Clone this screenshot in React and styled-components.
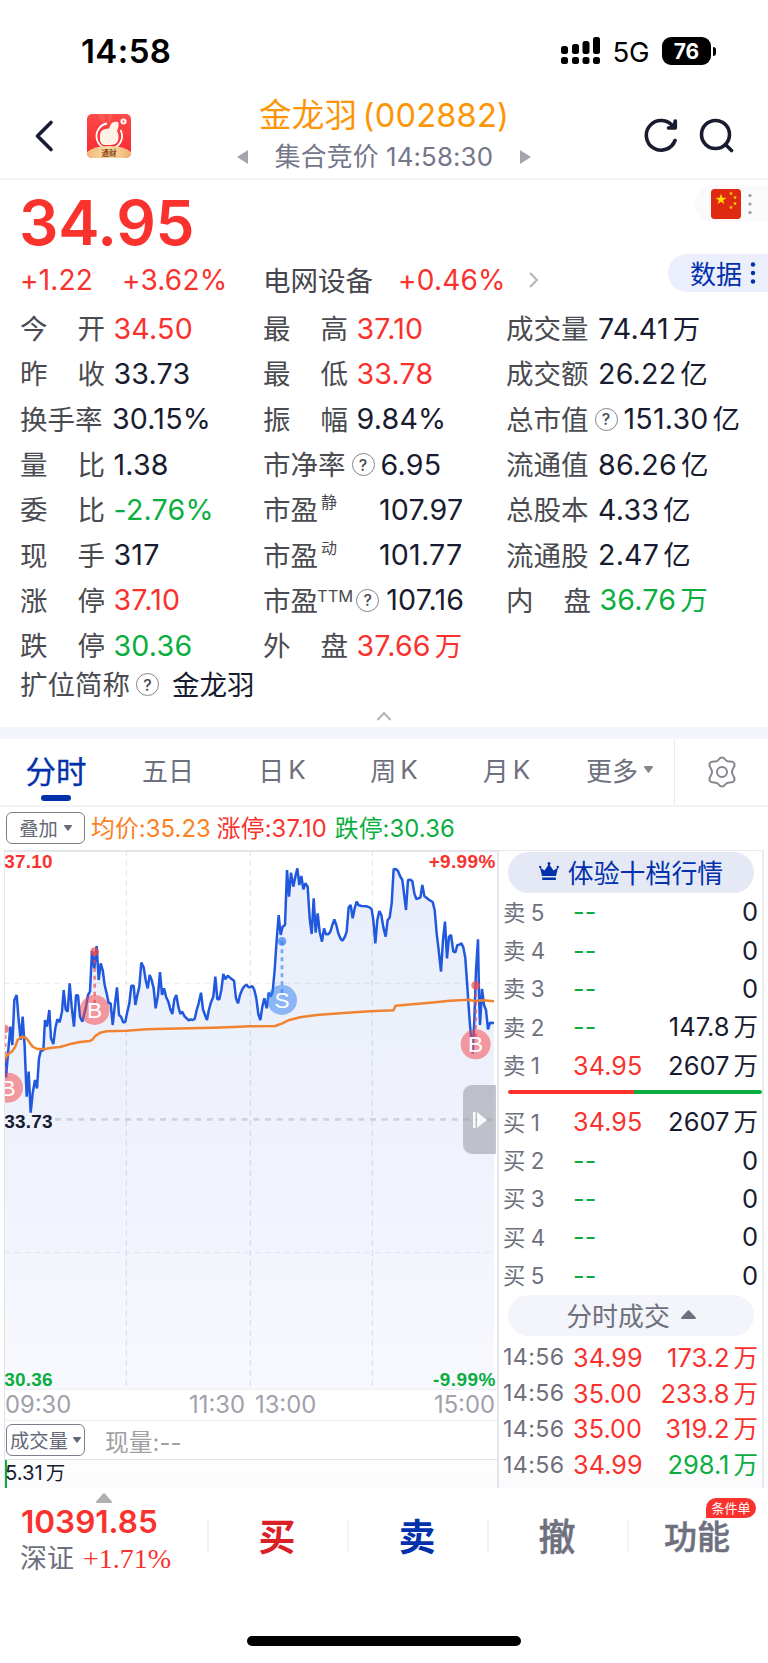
import React from 'react'
import styled, { createGlobalStyle } from 'styled-components'

const RED = '#f9322e'
const GREEN = '#0aae3e'
const BLUE = '#0331ab'
const DARK = '#191c30'
const GREY = '#6e707e'

const tones = { red: RED, green: GREEN, dark: DARK, orange: '#fb8124' }

const GlobalStyle = createGlobalStyle`
  * {
    box-sizing: border-box;
  }
  body {
    margin: 0;
    background: #fff;
    font-family: Inter, 'Noto Sans CJK SC', sans-serif;
    color: ${DARK};
  }
`
const Page = styled.div`
  width: 768px;
  height: 1663px;
  display: flex;
  flex-direction: column;
  overflow: hidden;
  background: #fff;
  white-space: nowrap;
`

/* status bar */
const StatusBar = styled.div`
  height: 88px;
  padding: 14px 52px 0 81px;
  display: flex;
  align-items: center;
  justify-content: space-between;
`
const Clock = styled.span`
  font-size: 33px;
  font-weight: 600;
  letter-spacing: 0.4px;
  color: #000;
`
const StatusRight = styled.div`
  display: flex;
  align-items: center;
  color: #000;
`
const Network = styled.span`
  font-size: 27.5px;
  margin: 1px 13px 0 12px;
  letter-spacing: -0.4px;
`
const Battery = styled.div`
  width: 49px;
  height: 28px;
  border-radius: 9px;
  background: #000;
  color: #fff;
  font-size: 21px;
  font-weight: 700;
  display: flex;
  align-items: center;
  justify-content: center;
`
const BatteryNub = styled.div`
  width: 3px;
  height: 9px;
  margin-left: 2px;
  border-radius: 0 3px 3px 0;
  background: #000;
`

/* header */
const Header = styled.div`
  height: 92px;
  display: flex;
  border-bottom: 2px solid #f4f4f6;
`
const HeaderLeft = styled.div`
  width: 237px;
  padding: 26px 0 0 34px;
  display: flex;
  gap: 33px;
`
const HeaderCenter = styled.div`
  width: 294px;
  display: flex;
  flex-direction: column;
  align-items: center;
`
const StockName = styled.div`
  margin-top: 7px;
  font-size: 32.6px;
  line-height: 40px;
  letter-spacing: 0.2px;
  word-spacing: -4px;
  color: #fc9508;
`
const Session = styled.div`
  width: 294px;
  display: flex;
  justify-content: space-between;
  align-items: center;
  font-size: 25.8px;
  line-height: 32px;
  margin-top: 6px;
  letter-spacing: 0.15px;
  color: #74768a;
`
const HeaderRight = styled.div`
  padding: 29px 0 0 112px;
  display: flex;
  gap: 20px;
`

/* quote */
const Quote = styled.div`
  height: 547px;
  padding-left: 20px;
  display: flex;
  flex-direction: column;
`
const PriceRow = styled.div`
  height: 74px;
  display: flex;
  justify-content: space-between;
`
const Price = styled.div`
  margin-left: -1px;
  font-size: 62px;
  line-height: 86px;
  font-weight: 600;
  letter-spacing: -0.2px;
  color: ${RED};
`
const FlagPill = styled.div`
  width: 73px;
  height: 37px;
  margin-top: 5px;
  padding-left: 16px;
  border-radius: 19px 0 0 19px;
  background: #fafafa;
  display: flex;
  align-items: center;
  gap: 5px;
`
const ChangeRow = styled.div`
  height: 52px;
  display: flex;
  align-items: center;
  font-size: 28px;
  color: ${RED};
`
const Change = styled.span`
  width: ${p => p.$w}px;
  letter-spacing: 0.2px;
`
const Sector = styled.span`
  width: 135px;
  margin: -3px 0 0 -1px;
  font-size: 27.5px;
  color: #45464e;
`
const DataPill = styled.div`
  width: 100px;
  height: 38px;
  margin: -14px 0 0 auto;
  padding: 0 0 2px 22px;
  border-radius: 19px 0 0 19px;
  background: #ebeffc;
  display: flex;
  align-items: center;
  gap: 7px;
  font-size: 26px;
  color: ${BLUE};
  svg {
    margin-top: 2px;
  }
`
const Stats = styled.div`
  display: grid;
  grid-template-columns: 243px 243px 262px;
  grid-auto-rows: 45.3px;
`
const Cell = styled.div`
  display: flex;
  align-items: center;
`
const Label = styled.div`
  min-width: ${p => (p.$spread ? '85px' : '0')};
  margin-top: -3px;
  display: flex;
  align-items: center;
  justify-content: space-between;
  font-size: 27.5px;
  color: #4a4b50;
`
const Sup = styled.span`
  align-self: flex-start;
  margin: ${p => (p.$wide ? '7px -3px 0 -1px' : '1px 0 0 3px')};
  font-size: ${p => (p.$wide ? 16.5 : 16)}px;
`
const Value = styled.div`
  margin-left: ${p => p.$gap}px;
  font-size: 28.6px;
  line-height: 34px;
  letter-spacing: 0.2px;
  color: ${p => tones[p.$tone]};
  b {
    margin-left: 4px;
    font-size: 27.5px;
    font-weight: 400;
    line-height: 1;
  }
`
const Help = styled.span`
  width: 23px;
  height: 23px;
  margin-left: 6px;
  border: 1.5px solid #85868c;
  border-radius: 50%;
  display: flex;
  align-items: center;
  justify-content: center;
  font-size: 16px;
  font-weight: 500;
  color: #4a4b50;
`
const AliasRow = styled.div`
  height: 33px;
  display: flex;
  align-items: center;
`
const Alias = styled.div`
  margin: -3px 0 0 13px;
  font-size: 27.5px;
`
const Collapse = styled.div`
  display: flex;
  justify-content: center;
  padding: 10px 20px 0 0;
`
const Band = styled.div`
  height: 12px;
  background: #f3f5fa;
`

/* tabs */
const Tabs = styled.div`
  height: 68px;
  display: flex;
  border-bottom: 2px solid #f2f3f6;
`
const Tab = styled.div`
  width: ${p => p.$w}px;
  padding-bottom: 5px;
  display: flex;
  align-items: center;
  justify-content: center;
  gap: 6px;
  font-size: 26px;
  color: ${GREY};
`
const ActiveTab = styled(Tab)`
  position: relative;
  font-size: 30.5px;
  -webkit-text-stroke: 0.3px ${BLUE};
  color: ${BLUE};
  &::after {
    content: '';
    position: absolute;
    bottom: 4px;
    width: 30px;
    height: 6px;
    border-radius: 3px;
    background: ${BLUE};
  }
`
const PeriodK = styled.span`
  margin-left: -2px;
  font-size: 26px;
`
const TabSettings = styled.div`
  flex: 1;
  border-left: 1px solid #ececf0;
  display: flex;
  align-items: center;
  justify-content: center;
`
const Legend = styled.div`
  height: 43px;
  padding: 0 0 1px 6px;
  display: flex;
  align-items: center;
`
const Select = styled.div`
  width: 79px;
  height: 32px;
  padding-bottom: 1px;
  border: 1.5px solid #7c7e8c;
  border-radius: 6px;
  display: flex;
  align-items: center;
  justify-content: center;
  gap: ${p => p.$gap || 6}px;
  font-size: 19.3px;
  color: #666877;
`
const LegendItem = styled.span`
  margin: -4px 0 0 ${p => p.$ml}px;
  font-size: 23.8px;
  letter-spacing: 0.1px;
  color: ${p => tones[p.$tone]};
`

/* chart and order book */
const Market = styled.div`
  height: 638px;
  padding-left: 4px;
  display: flex;
  background: linear-gradient(#fff 94%, #fbfbfd);
`
const ChartPane = styled.div`
  width: 495px;
  border: 2px solid #e4e5ea;
  border-width: 2px 2px 0 1px;
  display: flex;
  flex-direction: column;
`
const Plot = styled.div`
  position: relative;
  height: 538px;
  svg {
    display: block;
  }
`
const Handle = styled.div`
  position: absolute;
  right: 1px;
  top: 233px;
  width: 33px;
  height: 69px;
  border-radius: 9px 0 0 9px;
  background: rgba(150, 152, 160, 0.55);
  display: flex;
  align-items: center;
  justify-content: center;
`
const Times = styled.div`
  height: 31px;
  padding-bottom: 2px;
  display: flex;
  align-items: center;
  font-size: 23.8px;
  color: #a0a1aa;
  border-bottom: 1px solid #ececf0;
  span:nth-child(2) {
    margin: 0 10px 0 auto;
  }
  span:nth-child(4) {
    margin: 0 2px 0 auto;
  }
`
const VolumeHead = styled.div`
  height: 39px;
  padding-left: 1px;
  display: flex;
  align-items: center;
  gap: 20px;
  font-size: 23.8px;
  color: #a0a0a4;
  border-bottom: 1px solid #e4e5ea;
`
const Volume = styled.div`
  flex: 1;
  border-left: 2px solid ${GREEN};
  font-size: 20.3px;
  line-height: 25px;
  letter-spacing: 0;
  span {
    margin-left: -2px;
  }
  b {
    margin-left: 3px;
    font-size: 19.5px;
    font-weight: 400;
  }
`
const Book = styled.div`
  width: 265px;
  border: 1px solid #e9eaee;
  border-width: 1px 2px 0 0;
  display: flex;
  flex-direction: column;
`
const BookPill = styled.div`
  width: 246px;
  height: 41px;
  flex: none;
  margin: ${p => (p.$light ? '0 0 4px' : '1px 0 0')} 9px;
  padding-bottom: 2px;
  border-radius: 21px;
  background: ${p => (p.$light ? '#f3f5fa' : '#e5e9f5')};
  color: ${p => (p.$light ? GREY : BLUE)};
  display: flex;
  align-items: center;
  justify-content: center;
  gap: ${p => (p.$light ? 11 : 9)}px;
  font-size: 25.9px;
`
const BookRow = styled.div`
  height: ${p => p.$h}px;
  padding: 0 4px 0 4px;
  display: flex;
  align-items: center;
`
const Side = styled.span`
  width: 70px;
  margin-top: ${p => (p.$time ? -1 : -3)}px;
  font-size: ${p => (p.$time ? 23.2 : 22.4)}px;
  letter-spacing: ${p => (p.$time ? 0.4 : 0)}px;
  word-spacing: -1px;
  color: ${GREY};
`
const BookPrice = styled.span`
  font-size: 25.2px;
  letter-spacing: 0.1px;
  color: ${p => tones[p.$tone]};
`
const Amount = styled.span`
  margin-left: auto;
  font-size: 25.5px;
  line-height: 30px;
  color: ${p => tones[p.$tone]};
  b {
    margin-left: 4px;
    font-size: 24.5px;
    font-weight: 400;
    line-height: 1;
  }
`
const Ratio = styled.div`
  width: 254px;
  height: 4px;
  flex: none;
  margin: 5px 0 9px 9px;
  border-radius: 2px;
  background: linear-gradient(90deg, ${RED} 49.5%, ${GREEN} 49.5%);
`

/* bottom bar */
const BottomBar = styled.div`
  height: 148px;
  display: flex;
`
const IndexBox = styled.div`
  width: 207px;
  padding: 5px 0 0 20px;
`
const IndexArrow = styled.div`
  height: 10px;
  padding-left: 76px;
  display: flex;
`
const IndexValue = styled.div`
  font-size: 31.5px;
  line-height: 38px;
  font-weight: 600;
  letter-spacing: 0;
  margin-left: 1px;
  color: ${RED};
`
const IndexChange = styled.div`
  display: flex;
  align-items: center;
  gap: 9px;
  margin-top: -1px;
  font-size: 27px;
  line-height: 38px;
  color: ${GREY};
  span {
    font-family: 'Liberation Serif', serif;
    font-size: 28px;
    color: ${RED};
  }
`
const Action = styled.div`
  position: relative;
  width: 140px;
  height: 32px;
  margin-top: 32px;
  padding: 0 2px 2px 0;
  border-left: 2px solid #f3f4fa;
  display: flex;
  align-items: center;
  justify-content: center;
  font-size: ${p => p.$size || 37}px;
  font-weight: ${p => (p.$muted ? 500 : 700)};
  -webkit-text-stroke: ${p => (p.$muted ? '0.5px' : '0')} ${p => p.$color};
  color: ${p => p.$color};
`
const Badge = styled.span`
  position: absolute;
  right: 11px;
  top: -22px;
  width: 50px;
  height: 20px;
  border-radius: 10px 10px 10px 0;
  background: ${RED};
  color: #fff;
  font-size: 13px;
  font-weight: 400;
  line-height: 20px;
  text-align: center;
  -webkit-text-stroke: 0;
`
const HomeIndicator = styled.div`
  width: 274px;
  height: 10px;
  margin-left: 247px;
  border-radius: 5px;
  background: #000;
`

const stats = [
  [['今开', '34.50', 'red'], ['最高', '37.10', 'red'], ['成交量', '74.41', 'dark', { unit: '万' }]],
  [['昨收', '33.73', 'dark'], ['最低', '33.78', 'red'], ['成交额', '26.22', 'dark', { unit: '亿' }]],
  [['换手率', '30.15%', 'dark'], ['振幅', '9.84%', 'dark'], ['总市值', '151.30', 'dark', { unit: '亿', help: true, gap: 6 }]],
  [['量比', '1.38', 'dark'], ['市净率', '6.95', 'dark', { help: true, gap: 6 }], ['流通值', '86.26', 'dark', { unit: '亿' }]],
  [['委比', '-2.76%', 'green'], ['市盈', '107.97', 'dark', { sup: '静', gap: 42 }], ['总股本', '4.33', 'dark', { unit: '亿' }]],
  [['现手', '317', 'dark'], ['市盈', '101.77', 'dark', { sup: '动', gap: 42 }], ['流通股', '2.47', 'dark', { unit: '亿' }]],
  [['涨停', '37.10', 'red'], ['市盈', '107.16', 'dark', { sup: 'TTM', help: true, gap: 7 }], ['内盘', '36.76', 'green', { unit: '万' }]],
  [['跌停', '30.36', 'green'], ['外盘', '37.66', 'red', { unit: '万' }]],
]

const asks = [['卖 5', '--', '0'], ['卖 4', '--', '0'], ['卖 3', '--', '0'], ['卖 2', '--', '147.8万'], ['卖 1', '34.95', '2607万']]
const bids = [['买 1', '34.95', '2607万'], ['买 2', '--', '0'], ['买 3', '--', '0'], ['买 4', '--', '0'], ['买 5', '--', '0']]
const trades = [
  ['34.99', '173.2万', 'red'],
  ['35.00', '233.8万', 'red'],
  ['35.00', '319.2万', 'red'],
  ['34.99', '298.1万', 'green'],
]

const morning = '14,655 18,712 24,640 31,560 37,615 43,480 50,465 56,540 62,600 68,530 74,620 80,770 86,695 92,818 98,760 105,720 111,745 117,655 123,630 130,632 135,540 141,560 148,510 153,595 160,612 166,565 172,538 179,547 186,515 191,450 197,508 203,515 209,430 215,500 222,560 228,466 234,466 240,530 247,545 258,500 264,465 270,455 276,333 283,385 290,318 296,420 302,370 308,390 314,435 320,460 326,490 332,490 338,555 344,500 351,442 357,525 363,530 370,548 376,545 382,515 388,490 394,437 401,437 406,495 412,465 418,440 424,368 431,382 437,420 443,445 449,405 455,420 461,445 467,505 474,465 480,396 486,465 492,445 498,470 505,485 511,508 517,522 523,478 529,465 535,500 541,522 547,515 553,528 560,535 566,541 572,538 578,540 584,537 590,510 596,490 603,458 609,508 615,525 621,540 627,508 633,487 640,470 646,410 652,478 658,478 664,450 670,402 676,418 683,407 690,413 696,418 702,422 708,475 714,490 720,465 726,450 732,440 739,434 745,441'
const afternoon = '0,442 7,438 13,450 19,475 25,522 31,540 37,500 43,475 50,505 56,458 62,470 68,455 74,390 80,300 86,225 92,285 98,260 105,255 111,90 117,170 123,98 130,140 136,110 142,85 148,135 154,108 160,148 166,130 173,140 179,235 185,282 191,175 197,278 203,220 209,275 216,305 222,265 228,283 235,283 241,275 247,255 253,238 259,255 265,280 271,295 277,302 284,292 290,275 296,202 302,195 308,235 314,205 320,185 326,196 335,198 350,199 360,203 365,208 370,240 376,310 382,240 388,213 394,225 400,262 407,290 413,240 419,233 425,190 431,87 438,88 444,93 450,108 457,120 462,160 468,210 474,120 480,119 487,123 493,160 499,177 511,173 517,135 523,168 535,178 548,186 554,210 560,280 566,330 573,395 579,300 585,245 591,355 597,290 603,285 610,335 616,337 622,315 628,314 634,310 640,322 646,355 652,440 658,530 663,590 668,640 673,540 678,390 684,298 687,460 690,555 696,447 702,495 708,510 714,568 720,548 732,549'
const avgMorning = '14,655 25,642 35,635 45,622 53,600 62,592 75,591 85,602 98,620 112,627 135,627 155,623 180,621 215,611 240,606 270,603 278,598 286,588 300,578 320,574 380,572 440,568 500,566 640,563 700,561'
const avgAfternoon = '0,559 75,558 95,551 115,541 150,532 200,525 280,519 360,514 430,511 437,497 470,494 540,488 600,482 655,479 675,483 700,481 732,484'

// the afternoon session starts where the morning one ends
const joinSessions = (am, pm) =>
  am + ' ' + pm.split(' ').map(p => {
    const [x, y] = p.split(',')
    return (Number(x) + 750) + ',' + y
  }).join(' ')

const priceLine = joinSessions(morning, afternoon)
const avgLine = joinSessions(avgMorning, avgAfternoon)

const Triangle = ({ w, h, color, up }) => (
  <svg width={w} height={h} viewBox="0 0 12 8" preserveAspectRatio="none" fill={color}>
    <path d={up ? 'M5.2.6Q6-.2 6.8.6L11.8 6.6Q12.3 8 11 8H1Q-.3 8 .2 6.6Z' : 'M5.2 7.4Q6 8.2 6.8 7.4L11.8 1.4Q12.3 0 11 0H1Q-.3 0 .2 1.4Z'} />
  </svg>
)

const Dots = ({ color, r, gap }) => (
  <svg width={8} height={30} viewBox="0 0 8 30" fill={color}>
    {[15 - gap, 15, 15 + gap].map(y => <circle key={y} cx="4" cy={y} r={r} />)}
  </svg>
)

const Signal = () => (
  <svg width="40" height="28" viewBox="0 0 40 28">
    {[[0, 9, 8], [11, 7, 10], [21.5, 4, 13], [32, 0, 17]].map(([x, y, h]) => (
      <g key={x}>
        <rect x={x} y={y} width="7" height={h} rx="2.5" />
        <rect x={x} y="20" width="7" height="7" rx="2.5" />
      </g>
    ))}
  </svg>
)

const Logo = () => (
  <svg width="44" height="44" viewBox="0 0 44 44">
    <defs>
      <linearGradient id="logoBg" x1="0" y1="0" x2="0" y2="1">
        <stop offset="0" stopColor="#fb4a48" />
        <stop offset="1" stopColor="#fa2730" />
      </linearGradient>
      <linearGradient id="gold" x1="0" y1="0" x2="1" y2="0">
        <stop offset="0" stopColor="#f2b978" />
        <stop offset=".5" stopColor="#fbdda9" />
        <stop offset="1" stopColor="#f0b36e" />
      </linearGradient>
      <clipPath id="logoClip"><rect width="44" height="44" rx="5" /></clipPath>
    </defs>
    <g clipPath="url(#logoClip)">
      <rect width="44" height="44" fill="url(#logoBg)" />
      <path d="M10 0l9 13L17 0zM21 0l1 10L26 0z" fill="#ff7a6a" opacity=".4" />
      <path d="M20 9.500A12.800 12.800 0 1 0 33.500 16" fill="none" stroke="#fff" strokeWidth="1.800" />
      <path d="M14.500 17Q17 14.500 22 14.500L24 10Q26 7 31 8Q32.500 11 30 17Q32.500 21 31 26.500Q29.500 31 23 31H17Q13 30 13 25Q12.500 19 14.500 17Z" fill="#fff3e8" />
      <circle cx="36.500" cy="7.500" r="3" fill="#fff" />
      <path d="M36.500 5.800v3.400M35 7.300h3" stroke="#f55" strokeWidth=".7" />
      <path d="M0 44V38Q7 32 22 32T44 38V44Z" fill="url(#gold)" />
      <text x="22" y="41.500" textAnchor="middle" fontSize="7.500" fontWeight="700" fill="#8b4312">通财</text>
    </g>
  </svg>
)

const Flag = () => {
  const star = 'M0-5L1.200-1.600L4.800-1.500L1.900.6L2.900 4L0 2L-2.900 4L-1.900.6L-4.800-1.500L-1.200-1.600Z'
  return (
    <svg width="30" height="30" viewBox="0 0 30 30">
      <rect width="30" height="30" rx="3.500" fill="#df2910" />
      <path d={star} transform="translate(10 10.500) scale(1.150)" fill="#ffde00" />
      {[[20, 4.5], [24, 8.5], [24, 14.5], [20, 18.5]].map(([x, y]) => (
        <path key={y} d={star} transform={`translate(${x} ${y}) scale(.42)`} fill="#ffde00" />
      ))}
    </svg>
  )
}

const Marker = ({ x, y, dotY, letter, color }) => (
  <g>
    <line x1={x} x2={x} y1={dotY} y2={y - 10} stroke={color} strokeWidth="8" strokeDasharray="12 12" opacity=".65" />
    <circle cx={x} cy={dotY} r="13" fill={color} opacity=".7" />
    <circle cx={x} cy={y} r="45" fill={color} opacity=".53" />
    <text x={x} y={y + 24} textAnchor="middle" fontSize="68" fill="#fff">{letter}</text>
  </g>
)

// three drawing units per pixel
const Chart = () => (
  <svg width="492" height="538" viewBox="15 36 1476 1614" fontFamily="Liberation Sans, Arial, sans-serif">
    <defs>
      <linearGradient id="area" x1="0" y1="0" x2="0" y2="1">
        <stop offset="0" stopColor="#e9eefa" />
        <stop offset=".6" stopColor="#f0f3fd" />
        <stop offset="1" stopColor="#f8f9fe" />
      </linearGradient>
    </defs>
    <polygon points={`14,1647 ${priceLine} 1482,1647`} fill="url(#area)" />
    <g stroke="#5a6078" strokeOpacity=".18" strokeWidth="3" strokeDasharray="18 12">
      {[379, 751, 1117].map(x => <line key={x} x1={x} x2={x} y1="30" y2="1647" />)}
      {[430, 1238].map(y => <line key={y} x1="14" x2="1482" y1={y} y2={y} strokeOpacity=".12" />)}
    </g>
    <line x1="165" x2="1482" y1="838" y2="838" stroke="#cfd3e0" strokeWidth="8" strokeDasharray="18 17" />
    <line x1="14" x2="1491" y1="1648" y2="1648" stroke="#ececf2" strokeWidth="3" />
    <polyline points={priceLine} fill="none" stroke="#2159de" strokeWidth="7.500" strokeLinejoin="bevel" />
    <polyline points={avgLine} fill="none" stroke="#f08230" strokeWidth="7.500" strokeLinejoin="round" />
    <circle cx="24" cy="743" r="45" fill="#f5484c" opacity=".53" />
    <text x="24" y="767" textAnchor="middle" fontSize="68" fill="#fff">B</text>
    <circle cx="14" cy="567" r="13" fill="#f5484c" opacity=".7" />
    <line x1="16" x2="16" y1="585" y2="700" stroke="#f5484c" strokeWidth="7" strokeDasharray="12 12" opacity=".65" />
    <Marker x={284} y={510} dotY={335} letter="B" color="#f5484c" />
    <Marker x={846} y={480} dotY={304} letter="S" color="#3580ee" />
    <Marker x={1427} y={613} dotY={436} letter="B" color="#f5484c" />
    <g fontSize="57" fontWeight="700">
      <text x="13" y="85" fill={RED} textLength="145">37.10</text>
      <text x="13" y="864" fill={DARK} textLength="145">33.73</text>
      <text x="13" y="1637" fill={GREEN} textLength="145">30.36</text>
      <text x="1486" y="85" fill={RED} textAnchor="end" textLength="200">+9.99%</text>
      <text x="1486" y="1637" fill={GREEN} textAnchor="end" textLength="187">-9.99%</text>
    </g>
  </svg>
)

const splitUnit = text => (text.endsWith('万') ? <>{text.slice(0, -1)}<b>万</b></> : text)

const Stat = ({ item }) => {
  const [label, value, tone, opts = {}] = item
  const spread = label.length === 2 && !opts.sup
  return (
    <Cell>
      <Label $spread={spread}>
        {spread ? [...label].map(c => <span key={c}>{c}</span>) : <span>{label}</span>}
        {opts.sup && <Sup $wide={opts.sup === 'TTM'}>{opts.sup}</Sup>}
      </Label>
      {opts.help && <Help>?</Help>}
      <Value $tone={tone} $gap={opts.gap || (spread ? 8.5 : 9.5)}>
        {value}{opts.unit && <b>{opts.unit}</b>}
      </Value>
    </Cell>
  )
}

const renderLevels = levels =>
  levels.map(([side, price, amount]) => (
    <BookRow key={side} $h={38.4}>
      <Side>{side}</Side>
      <BookPrice $tone={price === '--' ? 'green' : 'red'}>{price}</BookPrice>
      <Amount $tone="dark">{splitUnit(amount)}</Amount>
    </BookRow>
  ))

const App = () => {
  return (
    <Page>
      <GlobalStyle />
      <StatusBar>
        <Clock>14:58</Clock>
        <StatusRight>
          <Signal />
          <Network>5G</Network>
          <Battery>76</Battery>
          <BatteryNub />
        </StatusRight>
      </StatusBar>

      <Header>
        <HeaderLeft>
          <svg width="20" height="44" viewBox="0 0 20 44" fill="none" stroke={DARK} strokeWidth="3.600" strokeLinecap="round" strokeLinejoin="round">
            <path d="M17 8.500L3.500 22L17 35.500" />
          </svg>
          <Logo />
        </HeaderLeft>
        <HeaderCenter>
          <StockName>金龙羽 (002882)</StockName>
          <Session>
            <svg width="11" height="14" viewBox="0 0 11 14" fill="#a3a4ae"><path d="M11 0V14L0 7Z" /></svg>
            <span>集合竞价 14:58:30</span>
            <svg width="11" height="14" viewBox="0 0 11 14" fill="#a3a4ae"><path d="M0 0V14L11 7Z" /></svg>
          </Session>
        </HeaderCenter>
        <HeaderRight>
          <svg width="36" height="36" viewBox="0 0 36 36" fill="none" stroke={DARK} strokeWidth="3.600" strokeLinecap="round" strokeLinejoin="round">
            <path d="M32 23.500A14.800 14.800 0 1 1 30 9.500" />
            <path d="M32.300 4V11H25.500L31 10Z" fill={DARK} />
          </svg>
          <svg width="36" height="36" viewBox="0 0 36 36" fill="none" stroke={DARK} strokeWidth="3.600" strokeLinecap="round">
            <circle cx="16.500" cy="17.500" r="14" />
            <path d="M26.500 27.500L32.500 33.500" />
          </svg>
        </HeaderRight>
      </Header>

      <Quote>
        <PriceRow>
          <Price>34.95</Price>
          <FlagPill>
            <Flag />
            <Dots color="#9a9a9e" r={1.6} gap={8.5} />
          </FlagPill>
        </PriceRow>
        <ChangeRow>
          <Change $w={102}>+1.22</Change>
          <Change $w={142}>+3.62%</Change>
          <Sector>电网设备</Sector>
          <Change $w={130}>+0.46%</Change>
          <svg width="12" height="18" viewBox="0 0 12 18" fill="none" stroke="#b4b4b8" strokeWidth="2"><path d="M2 2L9 9L2 16" /></svg>
          <DataPill>数据 <Dots color={BLUE} r={2.2} gap={8.5} /></DataPill>
        </ChangeRow>
        <Stats>
          {stats.flat().map((item, i) => <Stat key={i} item={item} />)}
        </Stats>
        <AliasRow>
          <Label>扩位简称</Label>
          <Help>?</Help>
          <Alias>金龙羽</Alias>
        </AliasRow>
        <Collapse>
          <svg width="16" height="10" viewBox="0 0 16 10" fill="none" stroke="#b2b3ba" strokeWidth="2"><path d="M1.500 9L8 2L14.500 9" /></svg>
        </Collapse>
      </Quote>
      <Band />

      <Tabs>
        <ActiveTab $w={112}>分时</ActiveTab>
        <Tab $w={112}>五日</Tab>
        <Tab $w={116}>日<PeriodK>K</PeriodK></Tab>
        <Tab $w={108}>周<PeriodK>K</PeriodK></Tab>
        <Tab $w={117}>月<PeriodK>K</PeriodK></Tab>
        <Tab $w={109}>更多 <Triangle w={9} h={7} color="#85868e" /></Tab>
        <TabSettings>
          <svg width="32" height="32" viewBox="0 0 32 32" fill="none" stroke="#85878e" strokeWidth="2" strokeLinejoin="round">
            <path d="M16 1.500Q17.800 1.500 19 3.300Q20.600 5.800 23.600 5.600Q27 5.400 28 7Q29.200 8.700 27.800 11.300Q26 14 26 16T27.800 20.700Q29.200 23.300 28 25Q27 26.600 23.600 26.400Q20.600 26.200 19 28.700Q17.800 30.500 16 30.500T13 28.700Q11.400 26.200 8.400 26.400Q5 26.600 4 25Q2.800 23.300 4.200 20.700Q6 18 6 16T4.200 11.300Q2.800 8.700 4 7Q5 5.400 8.400 5.600Q11.400 5.800 13 3.300Q14.200 1.500 16 1.500Z" />
            <circle cx="16" cy="16" r="5" />
          </svg>
        </TabSettings>
      </Tabs>
      <Legend>
        <Select>叠加 <Triangle w={8} h={6} color="#666877" /></Select>
        <LegendItem $tone="orange" $ml={6}>均价:35.23</LegendItem>
        <LegendItem $tone="red" $ml={6}>涨停:37.10</LegendItem>
        <LegendItem $tone="green" $ml={8}>跌停:30.36</LegendItem>
      </Legend>

      <Market>
        <ChartPane>
          <Plot>
            <Chart />
            <Handle>
              <svg width="16" height="18" viewBox="0 0 16 18" fill="#fff">
                <path d="M1 1H3.500V17H1ZM5 1L15 9L5 17Z" opacity=".9" />
              </svg>
            </Handle>
          </Plot>
          <Times>
            <span>09:30</span>
            <span>11:30</span>
            <span>13:00</span>
            <span>15:00</span>
          </Times>
          <VolumeHead>
            <Select $gap={5}>成交量 <Triangle w={8} h={6} color="#666877" /></Select>
            <span>现量:--</span>
          </VolumeHead>
          <Volume><span>{splitUnit('5.31万')}</span></Volume>
        </ChartPane>
        <Book>
          <BookPill>
            <svg width="20" height="19" viewBox="0 0 20 19" fill={BLUE}>
              <path d="M1 5.500L5.500 8.500L10 2L14.500 8.500L19 5.500L17 14H3ZM3.200 15.500H16.800V18H3.200Z" />
              <circle cx="1.200" cy="5" r="1.200" />
              <circle cx="10" cy="1.500" r="1.500" />
              <circle cx="18.800" cy="5" r="1.200" />
            </svg>
            体验十档行情
          </BookPill>
          {renderLevels(asks)}
          <Ratio />
          {renderLevels(bids)}
          <BookPill $light>分时成交 <Triangle w={15} h={9} color={GREY} up /></BookPill>
          {trades.map(([price, amount, tone], i) => (
            <BookRow key={i} $h={35.8}>
              <Side $time>14:56</Side>
              <BookPrice $tone="red">{price}</BookPrice>
              <Amount $tone={tone}>{splitUnit(amount)}</Amount>
            </BookRow>
          ))}
        </Book>
      </Market>

      <BottomBar>
        <IndexBox>
          <IndexArrow><Triangle w={16} h={10} color="#b0b0b2" up /></IndexArrow>
          <IndexValue>10391.85</IndexValue>
          <IndexChange>深证<span>+1.71%</span></IndexChange>
        </IndexBox>
        <Action $color="#da2128">买</Action>
        <Action $color={BLUE}>卖</Action>
        <Action $color={GREY} $muted>撤</Action>
        <Action $color={GREY} $size={33} $muted>
          功能
          <Badge>条件单</Badge>
        </Action>
      </BottomBar>
      <HomeIndicator />
    </Page>
  )
}

export default App
